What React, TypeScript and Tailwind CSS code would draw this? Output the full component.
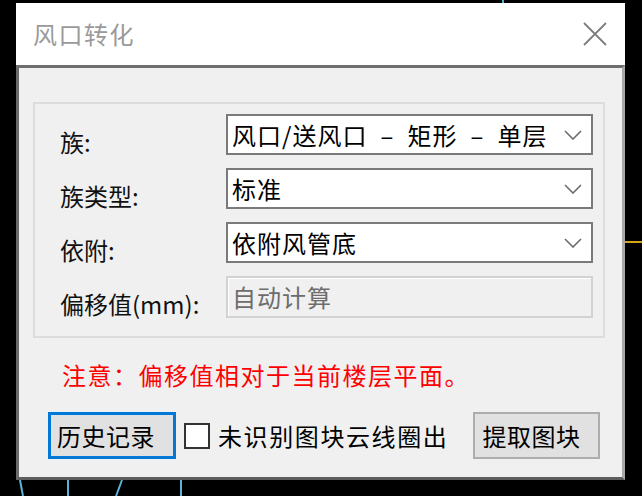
import React from 'react';

const FONT = { fontFamily: '"Noto Sans CJK SC", "Noto Sans", sans-serif' };

function Chevron() {
  return (
    <svg width="18" height="10" viewBox="0 0 18 10" className="shrink-0">
      <path d="M1 1 L9 9 L17 1" fill="none" stroke="#6b6b6b" strokeWidth="1.6" />
    </svg>
  );
}

function Combo({ children }: { children: React.ReactNode }) {
  return (
    <div className="flex items-center justify-between w-[367px] h-[41px] border-2 border-[#7a7a7a] bg-white pl-[4px] pr-[9px]">
      <span className="flex items-center text-[24px] leading-none text-black tracking-[1px] whitespace-pre">{children}</span>
      <Chevron />
    </div>
  );
}

function Row({ label, children }: { label: string; children: React.ReactNode }) {
  return (
    <div className="flex items-center">
      <div className="w-[166px] mt-[14px] text-[24px] leading-none text-[#111] whitespace-nowrap">{label}</div>
      {children}
    </div>
  );
}

function Dash() {
  return <span className="inline-block w-[40px] text-center">–</span>;
}

export default function App() {
  return (
    <div className="relative w-[642px] h-[496px] bg-black overflow-hidden" style={FONT}>
      {/* cad canvas lines behind the dialog */}
      <svg className="absolute inset-0" width="642" height="496">
        <line x1="503" y1="0" x2="503" y2="4" stroke="#4fb3d9" strokeWidth="2" />
        <line x1="625" y1="242" x2="642" y2="242" stroke="#d9a21a" strokeWidth="2" />
        <line x1="20" y1="480" x2="23" y2="496" stroke="#5ab4d8" strokeWidth="2" />
        <line x1="68" y1="480" x2="68" y2="496" stroke="#5ab4d8" strokeWidth="2" />
        <line x1="122" y1="480" x2="116" y2="496" stroke="#5ab4d8" strokeWidth="2" />
        <line x1="181" y1="480" x2="181" y2="496" stroke="#5ab4d8" strokeWidth="2" />
      </svg>

      <div className="relative flex flex-col w-[609px] h-[477px] ml-[16px] mt-[3px] bg-white">
        {/* title bar */}
        <div className="flex items-center justify-between h-[62px] pl-[17px] pr-[18px] bg-white">
          <span className="text-[24px] leading-none text-[#9a9a9a] tracking-[1.5px]">风口转化</span>
          <svg width="24" height="24" viewBox="0 0 24 24">
            <path d="M1 1 L23 23 M23 1 L1 23" stroke="#7d7d7d" strokeWidth="1.8" />
          </svg>
        </div>

        {/* client area */}
        <div className="flex-1 flex flex-col bg-[#f0f0f0] border-[3px] border-t-[#6e6e6e] border-l-[#6a6a6a] border-r-[#a8a8a8] border-b-[#5e5e5e]">
          <div className="ml-[14px] mt-[34px] w-[572px] h-[236px] border-2 border-[#dcdcdc] pl-[25px] pt-[10px] flex flex-col gap-[13px]">
            <Row label="族:">
              <Combo>
                风口/送风口<Dash />矩形<Dash />单层
              </Combo>
            </Row>
            <Row label="族类型:">
              <Combo>标准</Combo>
            </Row>
            <Row label="依附:">
              <Combo>依附风管底</Combo>
            </Row>
            <Row label="偏移值(mm):">
              <div className="flex items-center w-[367px] h-[42px] border-2 border-[#d2d2d2] bg-[#f0f0f0] shadow-[inset_1px_1px_0_#ffffff] pl-[4px]">
                <span className="text-[24px] leading-none text-[#6d6d6d] tracking-[1px]">自动计算</span>
              </div>
            </Row>
          </div>

          <div className="ml-[43px] mt-[21px] h-[32px] flex items-center text-[24px] leading-none text-[#ff0000] tracking-[1.5px] whitespace-nowrap">
            注意：偏移值相对于当前楼层平面。
          </div>

          <div className="flex items-center ml-[29px] mt-[21px]">
            <button className="flex items-center w-[128px] h-[47px] border-[3px] border-[#0078d7] bg-[#e1e1e1] pl-[6px] text-[24px] leading-none text-black tracking-[0.5px]">
              历史记录
            </button>
            <div className="ml-[8px] w-[26px] h-[26px] border-2 border-[#333333] bg-white" />
            <span className="ml-[8px] text-[24px] leading-none text-black tracking-[1.6px] whitespace-nowrap">未识别图块云线圈出</span>
            <button className="flex items-center ml-[25px] w-[127px] h-[47px] border-2 border-[#adadad] bg-[#e1e1e1] pl-[7px] text-[24px] leading-none text-black tracking-[0.5px]">
              提取图块
            </button>
          </div>
        </div>
      </div>
    </div>
  );
}
